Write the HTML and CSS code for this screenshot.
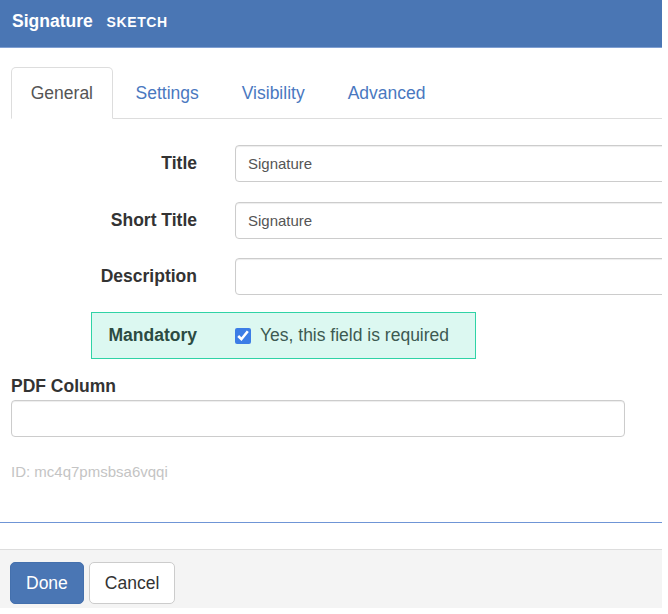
FILE: index.html
```html
<!DOCTYPE html>
<html lang="en">
<head>
    <meta charset="UTF-8">
    <meta name="viewport" content="width=device-width, initial-scale=1.0">
    <title>Field Editor</title>
    <link rel="stylesheet" href="styles.css">
</head>
<body>

<div class="panel">
    <!-- Header -->
    <div class="panel-header">
        <span class="panel-title">Signature</span>
        <span class="panel-type">SKETCH</span>
    </div>

    <div class="panel-body">
        <!-- Tabs -->
        <ul class="tabs">
            <li class="active"><a href="#">General</a></li>
            <li><a href="#">Settings</a></li>
            <li><a href="#">Visibility</a></li>
            <li><a href="#">Advanced</a></li>
        </ul>

        <form class="field-form">
            <div class="form-row">
                <label for="title">Title</label>
                <input type="text" id="title" value="Signature">
            </div>

            <div class="form-row">
                <label for="short-title">Short Title</label>
                <input type="text" id="short-title" value="Signature">
            </div>

            <div class="form-row">
                <label for="description">Description</label>
                <input type="text" id="description">
            </div>

            <div class="form-row mandatory">
                <label for="mandatory">Mandatory</label>
                <span class="check">
                    <input type="checkbox" id="mandatory" checked>
                    <span>Yes, this field is required</span>
                </span>
            </div>

            <div class="form-stack">
                <label for="pdf-column">PDF Column</label>
                <input type="text" id="pdf-column">
            </div>

            <p class="field-id">ID: mc4q7pmsbsa6vqqi</p>
        </form>
    </div>

    <!-- Footer -->
    <div class="panel-footer">
        <button type="button" class="btn primary">Done</button>
        <button type="button" class="btn">Cancel</button>
    </div>
</div>

</body>
</html>
```

FILE: styles.css
```css
* {
    box-sizing: border-box;
    margin: 0;
    padding: 0;
}

body {
    font-family: "Liberation Sans", Arial, sans-serif;
    font-size: 17.5px;
    line-height: 25px;
    color: #333;
    background-color: #fff;
}

.panel {
    width: 662px;
    overflow: hidden;
}

/* Header */
.panel-header {
    background-color: #4a76b4;
    color: #fff;
    padding: 9px 12px 12px;
    border-bottom: 1px solid #7f9fd2;
    white-space: nowrap;
}

.panel-title {
    font-weight: bold;
}

.panel-type {
    font-size: 14px;
    font-weight: bold;
    letter-spacing: 0.6px;
    margin-left: 9px;
}

/* Tabs */
.panel-body {
    border-bottom: 1px solid #6f95d6;
    padding-bottom: 40px;
}

.tabs {
    list-style: none;
    display: flex;
    margin: 19px 0 0 11px;
    border-bottom: 1px solid #ddd;
}

.tabs li {
    margin-right: 2.5px;
    margin-bottom: -1px;
}

.tabs a {
    display: block;
    padding: 12.5px 19.25px;
    border: 1px solid transparent;
    border-radius: 5px 5px 0 0;
    color: #4a78bf;
    text-decoration: none;
}

.tabs li.active a {
    padding: 12.5px 18.75px;
    color: #555;
    background-color: #fff;
    border-color: #ddd #ddd transparent;
}

/* Form */
.field-form {
    padding: 26px 0 0 11px;
}

.form-row {
    display: flex;
    align-items: center;
    margin-bottom: 19.5px;
}

.form-row label {
    flex: none;
    width: 186px;
    margin-right: 38px;
    text-align: right;
    font-weight: bold;
    white-space: nowrap;
}

input[type="text"] {
    font-family: inherit;
    font-size: 15px;
    color: #555;
    height: 37px;
    padding: 0 12px;
    border: 1px solid #ccc;
    border-radius: 4px;
    box-shadow: inset 0 1px 1px rgba(0, 0, 0, 0.075);
    background: #fff;
}

.form-row input[type="text"] {
    flex: none;
    width: 460px;
}

.form-row.mandatory {
    width: 385px;
    margin: -2.5px 0 0 80px;
    padding: 10px 0 10px 16px;
    background-color: #dcf8f1;
    border: 1px solid #2fd3a6;
    color: #3d5a52;
}

.form-row.mandatory label {
    width: 89px;
    color: #2c4b42;
}

.check {
    display: flex;
    align-items: center;
    white-space: nowrap;
}

.check input {
    width: 16px;
    height: 16px;
    margin: 0 9px 0 0;
    accent-color: #3c7de6;
}

.form-stack {
    margin-top: 15px;
}

.form-stack label {
    display: block;
    font-weight: bold;
    margin-bottom: 1px;
}

.form-stack input[type="text"] {
    width: 614px;
}

.field-id {
    margin-top: 24px;
    font-size: 15px;
    line-height: 21px;
    color: #c4c4c4;
}

/* Footer */
.panel-footer {
    margin-top: 26px;
    padding: 12px 10px 4px;
    background-color: #f4f4f4;
    border-top: 1px solid #ddd;
    display: flex;
    gap: 5px;
}

.btn {
    font-family: inherit;
    font-size: 17.5px;
    line-height: 25px;
    padding: 7.5px 15px;
    border: 1px solid #ccc;
    border-radius: 5px;
    background-color: #fff;
    color: #333;
    cursor: pointer;
}

.btn.primary {
    background-color: #4a76b4;
    border-color: #4470ad;
    color: #fff;
}
```
